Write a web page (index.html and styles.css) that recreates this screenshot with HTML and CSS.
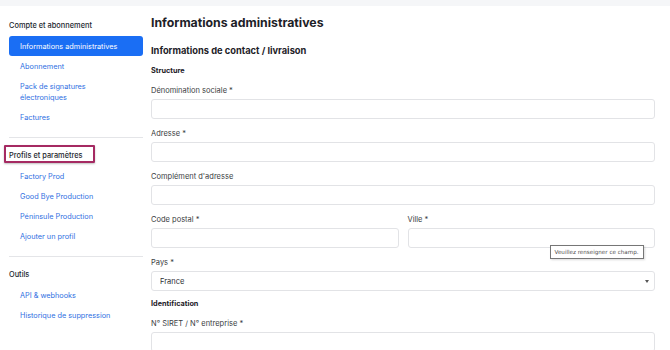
FILE: index.html
```html
<!DOCTYPE html>
<html lang="fr">
<head>
    <meta charset="UTF-8">
    <meta name="viewport" content="width=device-width, initial-scale=1.0">
    <title>Informations administratives</title>
    <link rel="stylesheet" href="styles.css">
</head>
<body>
    <div class="topbar"></div>
    <div class="layout">
        <nav class="sidebar">
            <div class="nav-group">
                <div class="nav-title">Compte et abonnement</div>
                <a class="nav-link active" href="#">Informations administratives</a>
                <a class="nav-link" href="#">Abonnement</a>
                <a class="nav-link" href="#">Pack de signatures<br>électroniques</a>
                <a class="nav-link" href="#">Factures</a>
            </div>
            <div class="nav-group">
                <div class="nav-title"><span class="highlight">Profils et paramètres</span></div>
                <a class="nav-link" href="#">Factory Prod</a>
                <a class="nav-link" href="#">Good Bye Production</a>
                <a class="nav-link" href="#">Péninsule Production</a>
                <a class="nav-link" href="#">Ajouter un profil</a>
            </div>
            <div class="nav-group">
                <div class="nav-title">Outils</div>
                <a class="nav-link" href="#">API &amp; webhooks</a>
                <a class="nav-link" href="#">Historique de suppression</a>
            </div>
        </nav>

        <main class="content">
            <h1>Informations administratives</h1>
            <h2>Informations de contact / livraison</h2>

            <form>
                <h3>Structure</h3>
                <div class="field">
                    <label for="denomination">Dénomination sociale *</label>
                    <input type="text" id="denomination">
                </div>
                <div class="field">
                    <label for="adresse">Adresse *</label>
                    <input type="text" id="adresse">
                </div>
                <div class="field">
                    <label for="complement">Complément d'adresse</label>
                    <input type="text" id="complement">
                </div>
                <div class="row">
                    <div class="field">
                        <label for="cp">Code postal *</label>
                        <input type="text" id="cp">
                    </div>
                    <div class="field has-tip">
                        <label for="ville">Ville *</label>
                        <input type="text" id="ville">
                        <div class="tooltip">Veuillez renseigner ce champ.</div>
                    </div>
                </div>
                <div class="field">
                    <label for="pays">Pays *</label>
                    <div class="select-wrap">
                        <select id="pays">
                            <option>France</option>
                        </select>
                    </div>
                </div>

                <h3>Identification</h3>
                <div class="field">
                    <label for="siret">N° SIRET / N° entreprise *</label>
                    <input type="text" id="siret">
                </div>
            </form>
        </main>
    </div>
</body>
</html>
```

FILE: styles.css
```css
body {
    margin: 0;
    font-family: Inter, "Noto Sans", sans-serif;
    color: #1f2329;
    background: #fff;
}
.topbar {
    height: 6px;
    background-color: #f5f6f8;
}
.layout {
    display: flex;
}
.sidebar {
    width: 134px;
    padding: 14px 0 0 9px;
    flex-shrink: 0;
}
.nav-group {
    display: flex;
    flex-direction: column;
    padding-bottom: 10px;
    margin-bottom: 12px;
    border-bottom: 1px solid #e4e5e8;
}
.nav-group:last-child {
    border-bottom: none;
}
.nav-title {
    font-size: 7.4px;
    line-height: 12px;
    font-weight: 500;
    color: #23272e;
    margin-bottom: 4px;
}
.highlight {
    position: relative;
}
.highlight::after {
    content: "";
    position: absolute;
    top: -6px;
    bottom: -3px;
    left: -5px;
    right: -12px;
    border: 2px solid #a52a62;
    border-radius: 1px;
    box-shadow: 0 1px 2px rgba(0, 0, 0, 0.25);
}
.nav-link {
    display: block;
    padding: 4.5px 11px;
    font-size: 7.3px;
    line-height: 11px;
    color: #2f6fe2;
    text-decoration: none;
}
.nav-link.active {
    background-color: #1a6ef4;
    color: #fff;
    border-radius: 3px;
}
.content {
    flex: 1;
    padding: 8px 15px 0 8px;
}
h1 {
    margin: 0 0 12px;
    font-size: 12.3px;
    line-height: 18px;
    font-weight: 700;
    color: #1d2127;
}
h2 {
    margin: 0 0 8px;
    font-size: 9.3px;
    line-height: 14px;
    font-weight: 700;
    color: #1d2127;
}
h3 {
    margin: 0 0 10px;
    font-size: 7.3px;
    line-height: 10px;
    font-weight: 700;
    color: #1d2127;
}
.field + h3 {
    margin-top: -2px;
}
.field {
    display: flex;
    flex-direction: column;
    margin-bottom: 10px;
}
label {
    font-size: 7.5px;
    line-height: 10px;
    color: #3a3d42;
    margin-bottom: 3px;
}
input[type="text"], select {
    display: block;
    box-sizing: border-box;
    width: 100%;
    height: 20px;
    padding: 0 8px;
    border: 1px solid #e2e3e6;
    border-radius: 3px;
    background: #fff;
    font-family: Inter, "Noto Sans", sans-serif;
    font-size: 7.5px;
    color: #2b2e33;
}
select {
    appearance: none;
}
.select-wrap {
    position: relative;
}
.select-wrap::after {
    content: "";
    position: absolute;
    right: 6px;
    top: 9px;
    border-left: 2px solid transparent;
    border-right: 2px solid transparent;
    border-top: 3px solid #555;
}
.row {
    display: flex;
    gap: 9px;
}
.row .field {
    flex: 1;
}
.has-tip {
    position: relative;
}
.tooltip {
    position: absolute;
    left: 142px;
    top: 30px;
    padding: 1px 4px;
    font-family: "DejaVu Sans", sans-serif;
    font-size: 5.6px;
    line-height: 10px;
    color: #505050;
    background: #fff;
    border: 1px solid #767676;
    box-shadow: 1px 1px 2px rgba(0, 0, 0, 0.15);
    white-space: nowrap;
}
```
